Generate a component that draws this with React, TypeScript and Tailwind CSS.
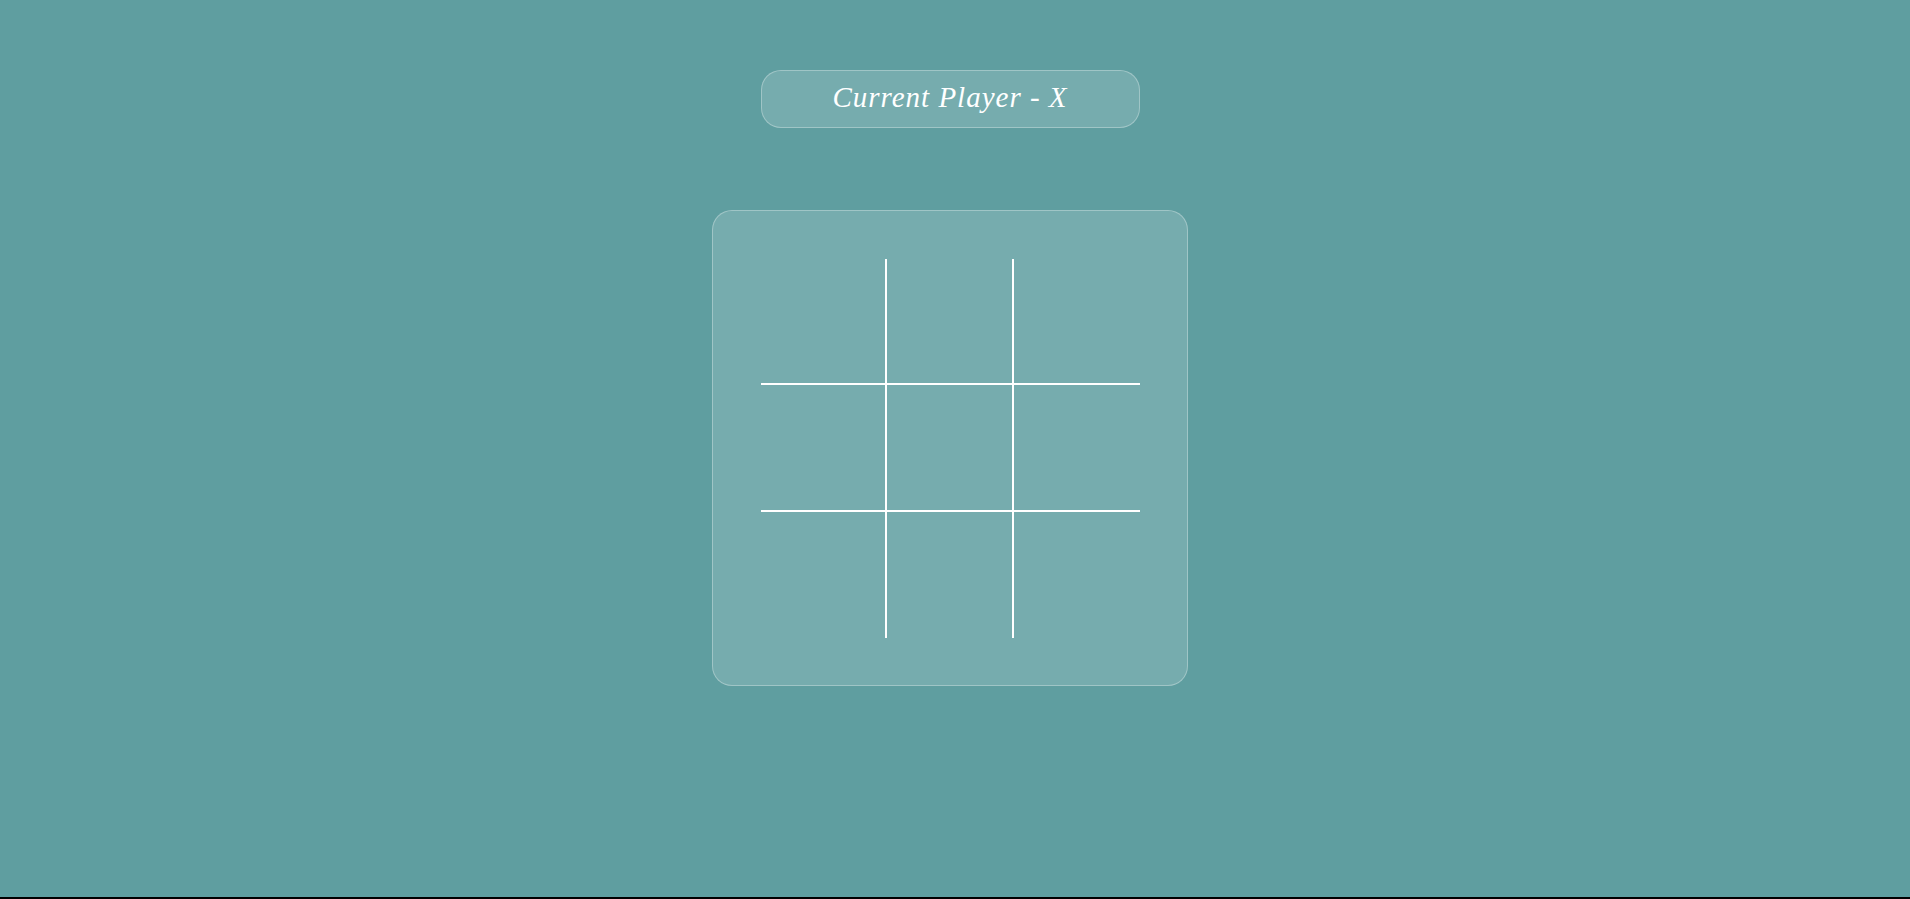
import React from 'react'

const cells = Array.from({ length: 9 }, (_, i) => i)

function Cell({ index }: { index: number }) {
    const col = index % 3
    const row = Math.floor(index / 3)
    return (
        <div
            className={[
                'border-white',
                col < 2 ? 'border-r-2' : '',
                row < 2 ? 'border-b-2' : '',
                row === 1 ? 'h-[127px]' : 'h-[126px]',
            ].join(' ')}
        />
    )
}

export default function App() {
    return (
        <div className="h-[899px] w-full bg-black">
            <div className="h-[897px] w-full bg-[#5f9ea0] flex flex-col items-center pr-[10px] pt-[70px]">
                <div className="w-[379px] h-[58px] rounded-[20px] border border-white/30 bg-white/15 flex items-center justify-center">
                    <h1
                        className="text-white italic text-[29px] leading-none tracking-[1px] pb-[3px]"
                        style={{ fontFamily: '"Liberation Serif", "DejaVu Serif", serif' }}
                    >
                        Current Player - X
                    </h1>
                </div>
                <div className="mt-[82px] w-[476px] h-[476px] rounded-[20px] border border-white/30 bg-white/15 pt-[48px] pl-[48px]">
                    <div className="grid grid-cols-[126px_127px_126px]">
                        {cells.map((i) => (
                            <Cell key={i} index={i} />
                        ))}
                    </div>
                </div>
            </div>
        </div>
    )
}
